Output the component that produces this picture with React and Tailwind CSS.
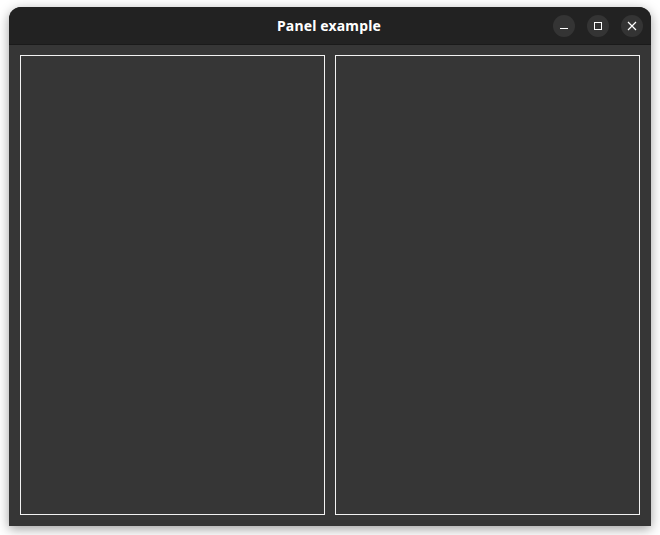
export default function App() {
  return (
    <div className="w-[660px] h-[535px] bg-white pt-[7px] px-[9px] overflow-hidden">
      <div className="w-[642px] h-[519px] flex flex-col rounded-t-[12px] bg-[#363636] overflow-hidden shadow-[0_3px_12px_rgba(0,0,0,0.38)]">
        <div className="relative h-[38px] shrink-0 flex items-center justify-center pr-[2px] bg-[#222222] border-b border-[#1a1a1a]">
          <span className="text-[14px] font-bold tracking-[0.16px] text-white font-['Noto_Sans',sans-serif] leading-none">Panel example</span>
          <div className="absolute right-[8px] top-[8px] flex gap-[12px]">
            <button className="w-[22px] h-[22px] rounded-full bg-[#343434] flex items-center justify-center">
              <svg width="10" height="10" viewBox="0 0 10 10"><path d="M1 7.5H9" stroke="#fff" strokeWidth="1" /></svg>
            </button>
            <button className="w-[22px] h-[22px] rounded-full bg-[#343434] flex items-center justify-center">
              <svg width="10" height="10" viewBox="0 0 10 10"><rect x="1.5" y="1.5" width="7" height="7" fill="none" stroke="#fff" strokeWidth="1" /></svg>
            </button>
            <button className="w-[22px] h-[22px] rounded-full bg-[#343434] flex items-center justify-center">
              <svg width="10" height="10" viewBox="0 0 10 10"><path d="M1 1L9 9M9 1L1 9" stroke="#fff" strokeWidth="1.2" /></svg>
            </button>
          </div>
        </div>
        <div className="flex-1 flex gap-[10px] pt-[10px] pb-[11px] px-[11px]">
          <div className="flex-1 border border-[#f2f2f2]" />
          <div className="flex-1 border border-[#f2f2f2]" />
        </div>
      </div>
    </div>
  );
}
